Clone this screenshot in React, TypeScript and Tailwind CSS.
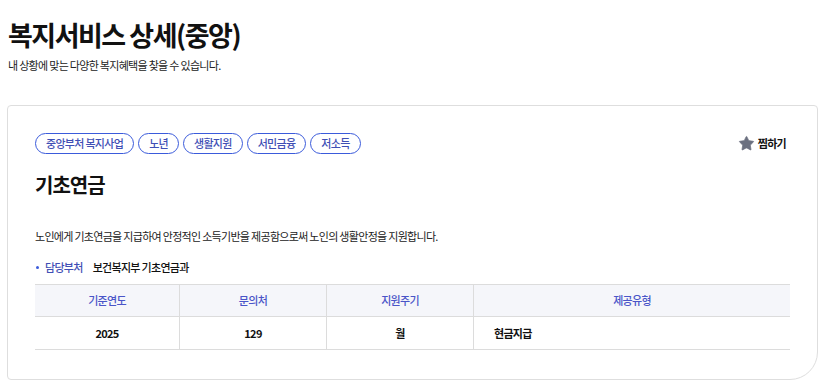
import { Star } from "lucide-react";

const tags = ["중앙부처 복지사업", "노년", "생활지원", "서민금융", "저소득"];

const columns = [
  { label: "기준연도", value: "2025", width: "w-[145px]", center: true },
  { label: "문의처", value: "129", width: "w-[147px]", center: true },
  { label: "지원주기", value: "월", width: "w-[147px]", center: true },
  { label: "제공유형", value: "현금지급", width: "flex-1", center: false },
];

export default function App() {
  return (
    <main
      className="min-h-[385px] bg-white px-[7px] pt-[15px] text-[#111] tracking-[-0.7px]"
      style={{ fontFamily: '"Noto Sans CJK KR", "Noto Sans", sans-serif' }}
    >
      <h1 className="pl-px text-[27px] font-bold leading-[40px] tracking-[-1.5px]">복지서비스 상세(중앙)</h1>
      <p className="mt-[2px] pl-px text-[11px] leading-[16px] text-[#222]">내 상황에 맞는 다양한 복지혜택을 찾을 수 있습니다.</p>

      <section className="mt-[32px] w-[811px] rounded-[4px] rounded-br-[28px] border border-[#dedede] px-[27px] pb-[29px] pt-[27px]">
        <div className="flex items-center justify-between">
          <div className="flex gap-[4px]">
            {tags.map((tag) => (
              <span
                key={tag}
                className="flex h-[21px] items-center rounded-full border border-[#3b5bdb] px-[10px] text-[11px] font-medium text-[#3f4fb5]"
              >
                {tag}
              </span>
            ))}
          </div>
          <button type="button" className="mr-[4px] flex items-center gap-[3px] text-[11px] font-bold">
            <Star className="h-[17px] w-[17px] fill-[#6b7080] text-[#6b7080]" strokeWidth={1} />
            찜하기
          </button>
        </div>

        <h2 className="mt-[17px] text-[20px] font-bold leading-[28px] tracking-[-1px]">기초연금</h2>

        <p className="mt-[29px] text-[11px] leading-[16px] text-[#222]">
          노인에게 기초연금을 지급하여 안정적인 소득기반을 제공함으로써 노인의 생활안정을 지원합니다.
        </p>

        <div className="mt-[15px] flex items-center text-[11px] leading-[16px]">
          <span className="mr-[6px] ml-[1px] h-[3px] w-[3px] rounded-full bg-[#3b5bdb]" />
          <span className="font-medium text-[#3f4fb5]">담당부처</span>
          <span className="ml-[10px] font-medium">보건복지부 기초연금과</span>
        </div>

        <div className="mt-[9px] border-t border-[#dcdcdc] text-[11px]">
          <div className="flex bg-[#f5f6fa]">
            {columns.map((col, i) => (
              <div
                key={col.label}
                className={`flex h-[32px] items-center justify-center border-b border-[#dcdcdc] font-medium text-[#4a55c8] ${col.width} ${i < columns.length - 1 ? "border-r" : ""}`}
              >
                {col.label}
              </div>
            ))}
          </div>
          <div className="flex">
            {columns.map((col, i) => (
              <div
                key={col.label}
                className={`flex h-[33px] items-center border-b border-[#dcdcdc] font-bold ${col.width} ${col.center ? "justify-center" : "pl-5"} ${i < columns.length - 1 ? "border-r" : ""}`}
              >
                {col.value}
              </div>
            ))}
          </div>
        </div>
      </section>
    </main>
  );
}
